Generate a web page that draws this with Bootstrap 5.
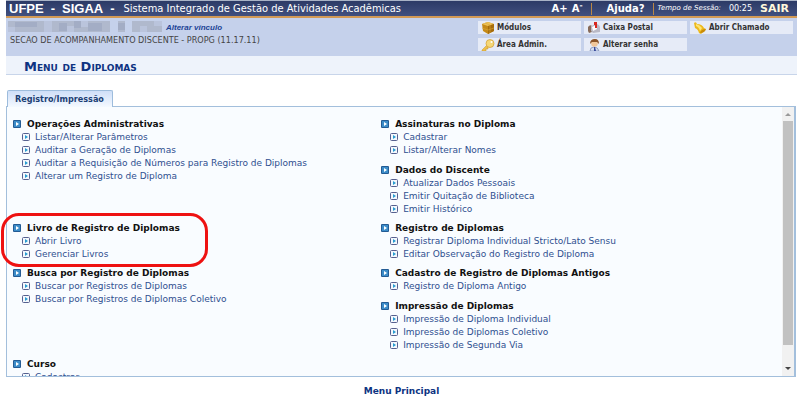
<!DOCTYPE html>
<html lang="pt-BR">
<head>
<meta charset="utf-8">
<meta name="viewport" content="width=device-width, initial-scale=1">
<title>SIGAA - Menu de Diplomas</title>
<link href="https://cdn.jsdelivr.net/npm/bootstrap@5.3.0/dist/css/bootstrap.min.css" rel="stylesheet">
<style>
  body { font-family: "DejaVu Sans", Verdana, sans-serif; font-size: 9px; line-height: 13px; color: #111; background: #fff; padding: 0 3px 0 6px; }
  a { color: #2f4f8f; text-decoration: none; }
  a:hover { text-decoration: underline; }
  .narrow-face { font-family: "DejaVu Sans Condensed", "DejaVu Sans", sans-serif; }
  .top-bar { background: linear-gradient(#2c3a66, #41507f); color: #fff; height: 18px; border-top: 1px solid #a9b3c6; border-bottom: 2px solid #d39a55; padding-left: 3px; padding-right: 8px; line-height: 15px; }
  .top-bar a { color: #fff; }
  .brand-words { font: bold 13px/15px "Liberation Sans", Arial, sans-serif; gap: 7px; margin-right: 9px; }
  .system-name { font-size: 11px; }
  .bar-tools { font-size: 10px; font-weight: bold; }
  .bar-rule { width: 1px; height: 12px; background: #b98746; }
  .help-link { margin: 0 8px 0 15px; }
  .session-label { font-size: 7px; font-style: italic; }
  .session-time { font-size: 8px; }
  .exit-link { font-size: 11px; color: #fff8dc !important; }
  .info-bar { background: #c5d1eb; height: 38px; padding: 3px 4px 0 2px; }
  .user-mask { width: 154px; height: 11px; }
  .switch-link { font: italic bold 8px/13px "Liberation Sans", Arial, sans-serif; color: #1b4396; }
  .unit-name { font-size: 9px; color: #444; line-height: 13px; padding-left: 2px; }
  .quick-grid { display: grid; grid-template-columns: repeat(3, 103px); gap: 4px 3px; }
  .quick-grid a { background: #e6ebf7; color: #333; font-size: 8px; font-weight: bold; height: 13px; line-height: 13px; padding-left: 3px; gap: 2px; }
  .quick-grid svg { width: 14px; height: 12px; }
  .page-title { background: #eef3fb; border-bottom: 1px solid #c8d5ea; color: #0e3482; font-size: 13px; font-weight: bold; font-variant: small-caps; line-height: 18px; height: 19px; padding: 2px 0 0 18px; margin: 0; }
  .tab-strip { padding: 15px 0 0 1px; }
  .tab-strip button { background: linear-gradient(#cfdff8, #f4f9ff); border: 1px solid #9dbcdc; border-bottom: 0; border-radius: 2px 2px 0 0; color: #1c3f74; font-size: 9px; font-weight: bold; height: 17px; line-height: 15px; padding: 0 8px 0 7px; margin-bottom: -1px; position: relative; z-index: 1; }
  .menu-frame { border: 1px solid #a3bfdc; border-right-width: 2px; background: #f9fcff; min-height: 0; margin-right: 1px; }
  .menu-view { overflow: hidden; padding: 11px 2px 0 6px; min-height: 0; }
  .menu-grid { display: grid; grid-template-columns: 12fr 13fr; row-gap: 6px; }
  .menu-grid h2 { font-size: 9px; line-height: 13px; font-weight: bold; margin: 0; gap: 6px; }
  .menu-grid ul { padding-left: 9px; }
  .menu-grid li { gap: 5px; height: 13px; white-space: nowrap; }
  .menu-grid svg { width: 8px; height: 8px; flex: none; margin-bottom: 2px; }
  .group-stack { gap: 7px; }
  .scroll-rail { width: 12px; background: #f1f1f1; padding: 5px 1px; }
  .scroll-rail svg { width: 6px; height: 5px; flex: none; }
  .scroll-thumb { background: #c1c1c1; margin: 4px 0 21px; }
  .highlight-ring { left: -6px; top: 106px; width: 207px; height: 54px; border: 3px solid #ee1111; border-radius: 18px; pointer-events: none; }
  .footer-link { padding: 8px 0 2px; color: #0e3482; font-weight: bold; }
  .footer-link a { color: #0e3482; }
</style>
</head>
<body class="d-flex flex-column vh-100 overflow-hidden">
<svg class="d-none" aria-hidden="true">
  <symbol id="group-mark" viewBox="0 0 8 8"><rect width="8" height="8" rx="1" fill="#235b94"/><rect x="1" y="1" width="6" height="6" fill="#3c8cc8"/><path d="M3 2l3 2-3 2z" fill="#fff"/></symbol>
  <symbol id="item-mark" viewBox="0 0 8 8"><rect x=".5" y=".5" width="7" height="7" rx="1" fill="#f4f8fd" stroke="#56608f"/><path d="M3 2l3 2-3 2z" fill="#279bd0"/></symbol>
</svg>

<header>
  <div class="top-bar d-flex align-items-center">
    <div class="brand-words d-flex"><span>UFPE</span><span>-</span><span>SIGAA</span><span>-</span></div>
    <span class="system-name narrow-face text-nowrap">Sistema Integrado de Gestão de Atividades Acadêmicas</span>
    <div class="bar-tools d-flex align-items-center ms-auto text-nowrap">
      <a href="#" class="me-1">A+</a><a href="#" class="me-2">A<sup>-</sup></a>
      <span class="bar-rule"></span>
      <a href="#" class="help-link">Ajuda?</a>
      <span class="bar-rule me-1"></span>
      <span class="session-label fw-normal me-2">Tempo de Sessão:</span><span class="session-time fw-normal me-2">00:25</span>
      <a href="#" class="exit-link">SAIR</a>
    </div>
  </div>
  <div class="info-bar d-flex justify-content-between">
    <div>
      <div class="d-flex gap-1">
        <svg class="user-mask" viewBox="0 0 154 11" preserveAspectRatio="none" role="img" aria-label="Usuário">
          <path fill="#b0b9cd" d="M0 0h102v11H0zM110 0h7v11h-7zM124 0h30v11h-30z"/>
          <path fill="#a3adc5" d="M7 1h22v5H7zM51 2h8v8h-8zM66 0h7v7h-7zM80 2h14v8H80zM110 2h7v7h-7z"/>
          <path fill="#bac4dc" d="M0 6h7v5H0zM36 0h8v11h-8zM59 5h7v6h-7zM73 0h7v6h-7zM132 5h7v6h-7zM146 0h8v5h-8z"/>
        </svg>
        <a href="#" class="switch-link">Alterar vínculo</a>
      </div>
      <div class="unit-name narrow-face">SECAO DE ACOMPANHAMENTO DISCENTE - PROPG (11.17.11)</div>
    </div>
    <nav class="quick-grid narrow-face align-content-start" aria-label="Atalhos">
      <a href="#" class="d-flex align-items-center"><svg viewBox="0 0 14 12"><path d="M1 2l6-2 6 2v7l-6 3-5-3z" fill="#c58a19"/><path d="M1 2l6-2 6 2-6 2z" fill="#eec35a"/><path d="M7 4l6-2v7l-6 3z" fill="#a56c0d"/><path d="M4 1l5 2v8M1 6l6 2 6-2" stroke="#d9a838" stroke-width=".6" fill="none"/></svg>Módulos</a>
      <a href="#" class="d-flex align-items-center"><svg viewBox="0 0 14 12"><path d="M1 5q2-3 4-1v6l-3 1-1-2z" fill="#876b59"/><path d="M4 4l6-2q3 1 3 4v4l-7 1-2-2z" fill="#b9b9c6"/><path d="M5 5l4-2 1 4-4 2z" fill="#fff"/><path d="M7 0h3v6H8V3H7z" fill="#d82920"/></svg>Caixa Postal</a>
      <a href="#" class="d-flex align-items-center"><svg viewBox="0 0 14 12"><path d="M1 1q2-2 3 1 5 0 7 4l2 1-5 5-2-1q-1-4-4-5z" fill="#edb91c"/><path d="M3 2q4 1 6 4L7 9Q6 5 3 4z" fill="#ffe573"/><path d="M7 11q1-4 6-4-1 4-6 4" fill="#c98b08"/></svg>Abrir Chamado</a>
      <a href="#" class="d-flex align-items-center"><svg viewBox="0 0 14 12"><path d="M7 5l-6 6v1h4v-2h2V8h2" fill="#edc04c" stroke="#c99526" stroke-width=".5"/><circle cx="9" cy="4.500" r="4" fill="#f6d776" stroke="#d09d32" stroke-width=".7"/><circle cx="10.500" cy="3" r="1" fill="#fff"/></svg>Área Admin.</a>
      <a href="#" class="d-flex align-items-center"><svg viewBox="0 0 14 12"><path d="M3 12q0-4 4-4t5 4z" fill="#d5dff4" stroke="#6878a5" stroke-width=".6"/><circle cx="7.500" cy="4.500" r="3.300" fill="#f1c79a"/><path d="M3 5q0-5 5-5 4 0 4 5l-2-2-5 0z" fill="#8b552a"/><path d="M7 8h1l1 4H7z" fill="#394b9b"/></svg>Alterar senha</a>
    </nav>
  </div>
  <h1 class="page-title">Menu de Diplomas</h1>
</header>

<div class="tab-strip" role="tablist"><button type="button" role="tab" aria-selected="true" class="narrow-face d-block">Registro/Impressão</button></div>
<main class="menu-frame d-flex flex-grow-1 position-relative">
  <div class="menu-view flex-grow-1">
    <div class="menu-grid">
      <section>
        <h2 class="d-flex align-items-center"><svg><use href="#group-mark"/></svg>Operações Administrativas</h2>
        <ul class="list-unstyled mb-0">
          <li class="d-flex align-items-center"><svg><use href="#item-mark"/></svg><a href="#">Listar/Alterar Parâmetros</a></li>
          <li class="d-flex align-items-center"><svg><use href="#item-mark"/></svg><a href="#">Auditar a Geração de Diplomas</a></li>
          <li class="d-flex align-items-center"><svg><use href="#item-mark"/></svg><a href="#">Auditar a Requisição de Números para Registro de Diplomas</a></li>
          <li class="d-flex align-items-center"><svg><use href="#item-mark"/></svg><a href="#">Alterar um Registro de Diploma</a></li>
        </ul>
      </section>
      <div class="group-stack d-flex flex-column">
        <section>
          <h2 class="d-flex align-items-center"><svg><use href="#group-mark"/></svg>Assinaturas no Diploma</h2>
          <ul class="list-unstyled mb-0">
            <li class="d-flex align-items-center"><svg><use href="#item-mark"/></svg><a href="#">Cadastrar</a></li>
            <li class="d-flex align-items-center"><svg><use href="#item-mark"/></svg><a href="#">Listar/Alterar Nomes</a></li>
          </ul>
        </section>
        <section>
          <h2 class="d-flex align-items-center"><svg><use href="#group-mark"/></svg>Dados do Discente</h2>
          <ul class="list-unstyled mb-0">
            <li class="d-flex align-items-center"><svg><use href="#item-mark"/></svg><a href="#">Atualizar Dados Pessoais</a></li>
            <li class="d-flex align-items-center"><svg><use href="#item-mark"/></svg><a href="#">Emitir Quitação de Biblioteca</a></li>
            <li class="d-flex align-items-center"><svg><use href="#item-mark"/></svg><a href="#">Emitir Histórico</a></li>
          </ul>
        </section>
      </div>
      <section>
        <h2 class="d-flex align-items-center"><svg><use href="#group-mark"/></svg>Livro de Registro de Diplomas</h2>
        <ul class="list-unstyled mb-0">
          <li class="d-flex align-items-center"><svg><use href="#item-mark"/></svg><a href="#">Abrir Livro</a></li>
          <li class="d-flex align-items-center"><svg><use href="#item-mark"/></svg><a href="#">Gerenciar Livros</a></li>
        </ul>
      </section>
      <section>
        <h2 class="d-flex align-items-center"><svg><use href="#group-mark"/></svg>Registro de Diplomas</h2>
        <ul class="list-unstyled mb-0">
          <li class="d-flex align-items-center"><svg><use href="#item-mark"/></svg><a href="#">Registrar Diploma Individual Stricto/Lato Sensu</a></li>
          <li class="d-flex align-items-center"><svg><use href="#item-mark"/></svg><a href="#">Editar Observação do Registro de Diploma</a></li>
        </ul>
      </section>
      <section>
        <h2 class="d-flex align-items-center"><svg><use href="#group-mark"/></svg>Busca por Registro de Diplomas</h2>
        <ul class="list-unstyled mb-0">
          <li class="d-flex align-items-center"><svg><use href="#item-mark"/></svg><a href="#">Buscar por Registros de Diplomas</a></li>
          <li class="d-flex align-items-center"><svg><use href="#item-mark"/></svg><a href="#">Buscar por Registros de Diplomas Coletivo</a></li>
        </ul>
      </section>
      <div class="group-stack d-flex flex-column">
        <section>
          <h2 class="d-flex align-items-center"><svg><use href="#group-mark"/></svg>Cadastro de Registro de Diplomas Antigos</h2>
          <ul class="list-unstyled mb-0">
            <li class="d-flex align-items-center"><svg><use href="#item-mark"/></svg><a href="#">Registro de Diploma Antigo</a></li>
          </ul>
        </section>
        <section>
          <h2 class="d-flex align-items-center"><svg><use href="#group-mark"/></svg>Impressão de Diplomas</h2>
          <ul class="list-unstyled mb-0">
            <li class="d-flex align-items-center"><svg><use href="#item-mark"/></svg><a href="#">Impressão de Diploma Individual</a></li>
            <li class="d-flex align-items-center"><svg><use href="#item-mark"/></svg><a href="#">Impressão de Diplomas Coletivo</a></li>
            <li class="d-flex align-items-center"><svg><use href="#item-mark"/></svg><a href="#">Impressão de Segunda Via</a></li>
          </ul>
        </section>
      </div>
      <section>
        <h2 class="d-flex align-items-center"><svg><use href="#group-mark"/></svg>Curso</h2>
        <ul class="list-unstyled mb-0">
          <li class="d-flex align-items-center"><svg><use href="#item-mark"/></svg><a href="#">Cadastrar</a></li>
        </ul>
      </section>
    </div>
  </div>
  <div class="scroll-rail d-flex flex-column" aria-hidden="true">
    <svg class="align-self-center" viewBox="0 0 6 5"><path d="M0 4l3-3 3 3z" fill="#999"/></svg>
    <div class="scroll-thumb flex-grow-1"></div>
    <svg class="align-self-center" viewBox="0 0 6 5"><path d="M0 1h6L3 4z" fill="#444"/></svg>
  </div>
  <div class="highlight-ring position-absolute"></div>
</main>
<footer class="footer-link text-center"><a href="#">Menu Principal</a></footer>
<script src="https://cdn.jsdelivr.net/npm/bootstrap@5.3.0/dist/js/bootstrap.bundle.min.js"></script>
</body>
</html>
